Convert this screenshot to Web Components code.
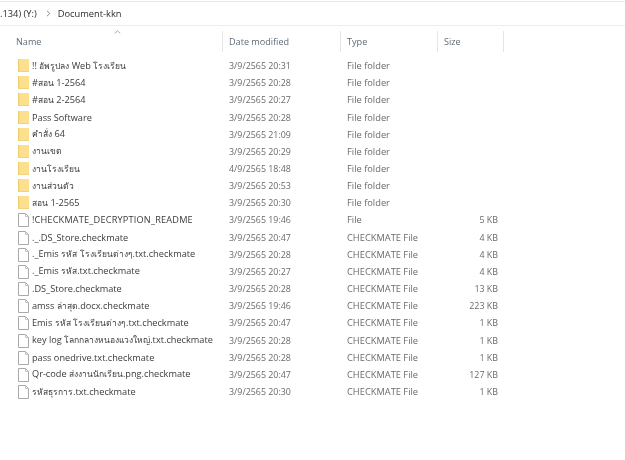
<!DOCTYPE html>
<html>
<head>
<meta charset="utf-8">
<style>
  html, body { margin: 0; background: #fff; }
  body { width: 625px; height: 460px; overflow: hidden; font-family: "Open Sans", "Noto Sans", "Liberation Sans", sans-serif; }
</style>
</head>
<body>
<file-explorer></file-explorer>
<script>
const COLUMNS = "207px 118px 97px 66px";

const FOLDERS = [
  ["!! อัพรูปลง Web โรงเรียน", "3/9/2565 20:31"],
  ["#สอน 1-2564", "3/9/2565 20:28"],
  ["#สอน 2-2564", "3/9/2565 20:27"],
  ["Pass Software", "3/9/2565 20:28"],
  ["คำสั่ง 64", "3/9/2565 21:09"],
  ["งานเขต", "3/9/2565 20:29"],
  ["งานโรงเรียน", "4/9/2565 18:48"],
  ["งานส่วนตัว", "3/9/2565 20:53"],
  ["สอน 1-2565", "3/9/2565 20:30"],
];

const FILES = [
  ["!CHECKMATE_DECRYPTION_README", "3/9/2565 19:46", "File", "5 KB"],
  ["._.DS_Store.checkmate", "3/9/2565 20:47", "CHECKMATE File", "4 KB"],
  ["._Emis รหัส โรงเรียนต่างๆ.txt.checkmate", "3/9/2565 20:28", "CHECKMATE File", "4 KB"],
  ["._Emis รหัส.txt.checkmate", "3/9/2565 20:27", "CHECKMATE File", "4 KB"],
  [".DS_Store.checkmate", "3/9/2565 20:28", "CHECKMATE File", "13 KB"],
  ["amss ล่าสุด.docx.checkmate", "3/9/2565 19:46", "CHECKMATE File", "223 KB"],
  ["Emis รหัส โรงเรียนต่างๆ.txt.checkmate", "3/9/2565 20:47", "CHECKMATE File", "1 KB"],
  ["key log โลกกลางหนองแวงใหญ่.txt.checkmate", "3/9/2565 20:28", "CHECKMATE File", "1 KB"],
  ["pass onedrive.txt.checkmate", "3/9/2565 20:28", "CHECKMATE File", "1 KB"],
  ["Qr-code ส่งงานนักเรียน.png.checkmate", "3/9/2565 20:47", "CHECKMATE File", "127 KB"],
  ["รหัสธุรการ.txt.checkmate", "3/9/2565 20:30", "CHECKMATE File", "1 KB"],
];

// thai and all-caps runs sit at different widths than the rest of the name
const markRuns = (name) => name
  .replace(/[\u0E00-\u0E7F]+/g, '<span class="th">$&</span>')
  .replace(/[A-Z_]{6,}/g, '<span class="caps">$&</span>');

class AddressBar extends HTMLElement {
  constructor() {
    super();
    this.attachShadow({ mode: "open" });
    this.shadowRoot.innerHTML = `
      <style>
        :host {
          display: flex;
          align-items: center;
          box-sizing: border-box;
          height: 25px;
          margin-top: 1px;
          border-top: 1px solid #e6e6e6;
          border-bottom: 1px solid #ededed;
          font-size: 9.3px;
          color: #2b2b2b;
          white-space: nowrap;
        }
        svg { margin: 0 7px 0 9px; }
      </style>
      <span>.134) (Y:)</span>
      <svg width="5" height="7" viewBox="0 0 5 7"><path d="M1 .8 3.8 3.5 1 6.2" fill="none" stroke="#8a8a8a" stroke-width="1"/></svg>
      <span>Document-kkn</span>
    `;
  }
}

class ColumnHeader extends HTMLElement {
  constructor() {
    super();
    this.attachShadow({ mode: "open" });
    this.shadowRoot.innerHTML = `
      <style>
        :host {
          display: grid;
          grid-template-columns: ${COLUMNS};
          height: 21px;
          margin-left: 16px;
          position: relative;
          font-size: 9.1px;
          color: #5d6b79;
        }
        div { display: flex; align-items: center; padding-left: 6px; border-right: 1px solid #e5e5e5; }
        div:first-of-type { padding-left: 0; }
        svg { position: absolute; left: 98px; top: -1px; }
      </style>
      <svg width="7" height="4" viewBox="0 0 7 4"><path d="M.7 3.5 3.5 .8 6.3 3.5" fill="none" stroke="#9a9a9a" stroke-width=".9"/></svg>
      <div>Name</div><div>Date modified</div><div>Type</div><div>Size</div>
    `;
  }
}

class FileIcon extends HTMLElement {
  constructor() {
    super();
    this.attachShadow({ mode: "open" });
    const folder = this.getAttribute("kind") === "folder";
    this.shadowRoot.innerHTML = `
      <style>
        :host { display: block; flex: none; width: 11px; height: 13px; }
        svg { display: block; }
      </style>
      ${folder
        ? `<svg width="11" height="13" viewBox="0 0 11 13">
             <rect x="0" y="0" width="11" height="13" fill="#fce08e"/>
             <rect x="0" y="0" width="1.2" height="13" fill="#efcb72"/>
             <rect x="0" y="12" width="11" height="1" fill="#f0d27f"/>
           </svg>`
        : `<svg width="11" height="14" viewBox="0 0 11 14">
             <path d="M.5.5H7.5L10.5 3.5V13.5H.5Z" fill="#fff" stroke="#a9a9a9"/>
             <path d="M7.5.5V3.5H10.5" fill="none" stroke="#c4c4c4"/>
           </svg>`}
    `;
  }
}

class FileRow extends HTMLElement {
  constructor() {
    super();
    this.attachShadow({ mode: "open" });
    const kind = this.getAttribute("kind");
    this.shadowRoot.innerHTML = `
      <style>
        :host {
          display: grid;
          grid-template-columns: ${COLUMNS};
          align-items: center;
          height: 17.16px;
          margin-left: 18px;
          font-size: 8.9px;
          color: #6a6a6a;
          white-space: nowrap;
        }
        .name { display: flex; align-items: center; gap: 3px; color: #3a3a3a; width: 205px; font-size: 9.2px; }
        .th { font-size: 8.5px; }
        .caps { letter-spacing: .18px; }
        .date { padding-left: 4px; }
        .type { padding-left: 4px; font-size: 9.3px; }
        .size { text-align: right; padding-right: 8px; }
      </style>
      <div class="name"><file-icon kind="${kind}"></file-icon><span>${markRuns(this.getAttribute("name"))}</span></div>
      <div class="date">${this.getAttribute("date")}</div>
      <div class="type">${this.getAttribute("type")}</div>
      <div class="size">${this.getAttribute("size") || ""}</div>
    `;
  }
}

class FileExplorer extends HTMLElement {
  constructor() {
    super();
    this.attachShadow({ mode: "open" });
    const row = (kind, [name, date, type, size]) =>
      `<file-row kind="${kind}" name="${name}" date="${date}" type="${type}" size="${size || ""}"></file-row>`;
    this.shadowRoot.innerHTML = `
      <style>
        :host { display: block; filter: blur(.3px); }
        column-header { margin-top: 5px; }
        .list { display: block; margin-top: 5px; }
      </style>
      <address-bar></address-bar>
      <column-header></column-header>
      <div class="list">
        ${FOLDERS.map(f => row("folder", [f[0], f[1], "File folder"])).join("")}
        ${FILES.map(f => row("file", f)).join("")}
      </div>
    `;
  }
}

customElements.define("address-bar", AddressBar);
customElements.define("column-header", ColumnHeader);
customElements.define("file-icon", FileIcon);
customElements.define("file-row", FileRow);
customElements.define("file-explorer", FileExplorer);
</script>
</body>
</html>
